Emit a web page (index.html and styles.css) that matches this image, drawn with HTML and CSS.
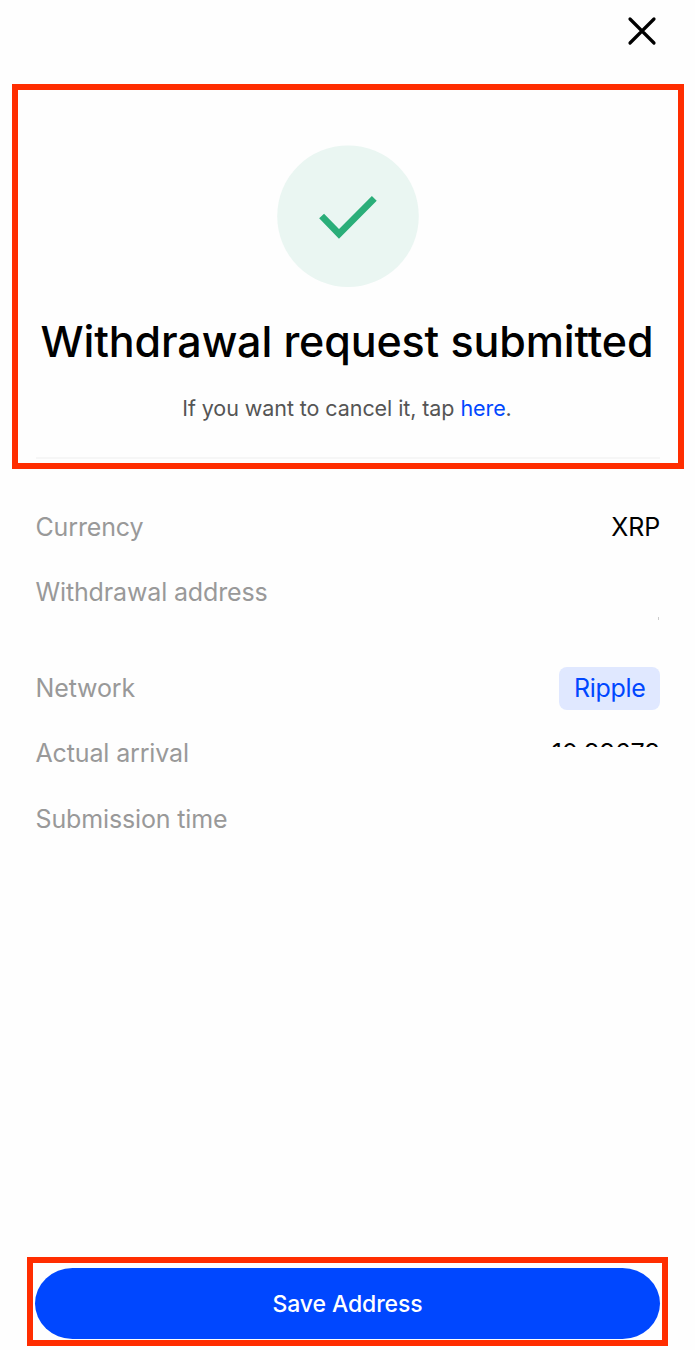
FILE: index.html
```html
<!DOCTYPE html>
<html lang="en">
<head>
<meta charset="utf-8">
<title>Withdrawal request submitted</title>
<link rel="stylesheet" href="styles.css">
</head>
<body>
<main class="screen">
  <header class="topbar">
    <svg class="close" viewBox="0 0 30 30" aria-label="Close"><path d="M3 3 27 27M27 3 3 27"/></svg>
  </header>
  <section class="status">
    <svg class="badge" viewBox="0 0 142 142"><circle cx="71" cy="71.2" r="70.8"/><path d="M44.6 71 62 88.9 97.3 53.4"/></svg>
    <h1 class="title">Withdrawal request submitted</h1>
    <p class="hint">If you want to cancel it, tap <a class="link">here</a>.</p>
    <hr class="divider">
  </section>
  <dl class="details">
    <div class="row"><dt>Currency</dt><dd>XRP</dd></div>
    <div class="row row-address"><dt>Withdrawal address</dt><dd class="trace"></dd></div>
    <div class="row"><dt>Network</dt><dd class="tag">Ripple</dd></div>
    <div class="row"><dt>Actual arrival</dt><dd class="amount">10.99679</dd></div>
    <div class="row"><dt>Submission time</dt></div>
  </dl>
  <footer class="action">
    <button class="save">Save Address</button>
  </footer>
</main>
</body>
</html>
```
FILE: styles.css
```css
* { box-sizing: border-box; }
body { margin: 0; background: #fefefe; font-family: Inter, sans-serif; color: #000; }
.screen { height: 1350px; display: flex; flex-direction: column; }
.topbar { height: 84px; padding: 16px 38px 0 0; display: flex; justify-content: flex-end; flex: none; }
.close { width: 30px; height: 30px; fill: none; stroke: #000; stroke-width: 3.2; stroke-linecap: round; }
.status { width: 672px; height: 385px; margin-left: 12px; padding: 55px 18px 0; border: 6px solid #ff2d00; display: flex; flex-direction: column; align-items: center; flex: none; }
.badge { width: 142px; height: 142px; fill: #eaf6f2; flex: none; }
.badge path { fill: none; stroke: #2aae79; stroke-width: 6.8; }
.title { margin: 26px 2px 0 0; font-size: 43px; line-height: 56px; font-weight: 500; white-space: nowrap; letter-spacing: -0.13px; }
.hint { margin: 24px 2px 0 0; font-size: 21.5px; line-height: 30px; color: #555; white-space: nowrap; letter-spacing: -0.08px; }
.link { color: #0047ff; }
.divider { width: 624px; height: 2px; margin: 34px 0 0; border: 0; background: #f6f6f6; }
.details { margin: 37px 35px 0; display: flex; flex-direction: column; gap: 22.4px; font-size: 25px; line-height: 43px; letter-spacing: -0.14px; }
.row { height: 43px; display: flex; justify-content: space-between; }
.row-address { height: 73px; }
dt { padding-left: 0.5px; color: #999; }
dd { margin: 0; }
.trace { align-self: flex-end; width: 1px; height: 3px; margin: 0 1px 24px; background: #ccc; }
.tag { padding: 0 14.5px; border-radius: 8px; background: #e0e8ff; color: #0047ff; letter-spacing: -0.3px; }
.amount { height: 15px; overflow: hidden; letter-spacing: 0; }
.action { width: 641px; height: 89px; margin: auto 0 4px 27px; padding: 5px 2px 1px; border: 6px solid #ff2d00; flex: none; }
.save { display: block; width: 625px; height: 71px; border: 0; border-radius: 38px / 36px; background: #0047ff; color: #fff; font: 500 23px/71px Inter, sans-serif; letter-spacing: -0.1px; padding: 1px 0 0; }
```
